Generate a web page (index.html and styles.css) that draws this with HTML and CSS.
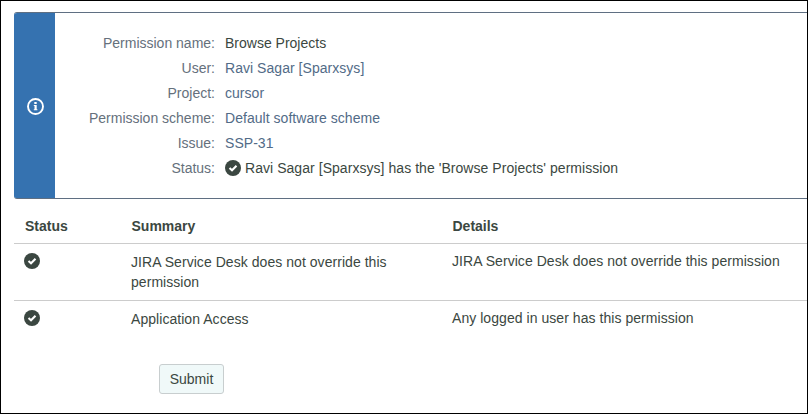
FILE: index.html
```html
<!DOCTYPE html>
<html lang="en">
<head>
<meta charset="utf-8">
<title>Permission Helper</title>
<link rel="stylesheet" href="styles.css">
</head>
<body>
<svg width="0" height="0" class="defs">
  <symbol id="check" viewBox="0 0 16 16">
    <circle cx="8" cy="8" r="8" fill="#3b4741"/>
    <path d="M4.5 8 7 10.2 11.5 5.7" fill="none" stroke="#fff" stroke-width="2.1"/>
  </symbol>
</svg>
<main class="page">
  <section class="message">
    <div class="message-side">
      <svg class="info" viewBox="0 0 17 17">
        <circle cx="8.5" cy="8.5" r="7.5" fill="none" stroke="#fff" stroke-width="1.9"/>
        <path d="M7.3 4h2.4v2H7.3zM6.8 7h2.9v4.2h.7v1H6.8v-1h.7V8h-.7z" fill="#fff"/>
      </svg>
    </div>
    <dl class="facts">
      <dt>Permission name:</dt><dd>Browse Projects</dd>
      <dt>User:</dt><dd><a>Ravi Sagar [Sparxsys]</a></dd>
      <dt>Project:</dt><dd><a>cursor</a></dd>
      <dt>Permission scheme:</dt><dd><a>Default software scheme</a></dd>
      <dt>Issue:</dt><dd><a>SSP-31</a></dd>
      <dt>Status:</dt><dd class="status"><svg class="check"><use href="#check"/></svg><span>Ravi Sagar [Sparxsys] has the 'Browse Projects' permission</span></dd>
    </dl>
  </section>
  <div class="table">
    <div class="row head"><div>Status</div><div>Summary</div><div>Details</div></div>
    <div class="row"><div><svg class="check"><use href="#check"/></svg></div><div class="summary">JIRA Service Desk does not override this permission</div><div class="details">JIRA Service Desk does not override this permission</div></div>
    <div class="row last"><div><svg class="check"><use href="#check"/></svg></div><div class="summary">Application Access</div><div class="details">Any logged in user has this permission</div></div>
  </div>
  <button class="submit">Submit</button>
</main>
</body>
</html>
```
FILE: styles.css
```css
* { box-sizing: border-box; }
body { margin: 0; background: #fff; }
.defs { position: absolute; }
.page {
  width: 808px;
  height: 414px;
  border: 1px solid #000;
  padding: 11px 0 0 13px;
  overflow: hidden;
  font: 14px/20px "Liberation Sans", Arial, sans-serif;
  color: #3b4741;
}
.message {
  display: flex;
  height: 187px;
  border: 1px solid #5f6f82;
  border-width: 1px 0;
  border-radius: 3px 0 0 3px;
  overflow: hidden;
}
.message-side {
  width: 41px;
  padding-top: 1px;
  background: #3572b0;
  display: flex;
  align-items: center;
  justify-content: center;
}
.info { width: 17px; height: 17px; margin-left: 1px; }
.facts {
  margin: 18px 0 0;
  display: grid;
  grid-template-columns: 160px auto;
  grid-auto-rows: 25px;
  column-gap: 10px;
  line-height: 25px;
  align-content: start;
}
dt { text-align: right; color: #65707c; }
dd { margin: 0; white-space: nowrap; }
dd a { color: #526b87; letter-spacing: 0.04px; }
.status { display: flex; align-items: center; gap: 4px; }
.status span, .details { letter-spacing: 0.05px; }
.check { display: block; width: 16px; height: 16px; }
.status .check { margin-bottom: 1px; }
.row {
  display: grid;
  grid-template-columns: 107px 321px 1fr;
  height: 57px;
  padding: 8px 0 0 10px;
  border-bottom: 1px solid #ccc;
}
.head { height: 45px; padding: 17px 0 0 10px; font-weight: bold; }
.head div { padding-left: 1px; }
.head div:nth-child(n+2) { padding-left: 0.5px; }
.last { border-bottom: 0; }
.row .check { margin-top: 1px; }
.summary { padding-right: 40px; letter-spacing: 0.05px; }
.details { white-space: nowrap; margin-top: -1px; }
.submit {
  display: block;
  width: 65px;
  height: 30px;
  margin: 6px 0 0 145px;
  padding: 0;
  border: 1px solid #c8cecf;
  border-radius: 3px;
  background: #f0f9f9;
  font: inherit;
  color: inherit;
}
```
